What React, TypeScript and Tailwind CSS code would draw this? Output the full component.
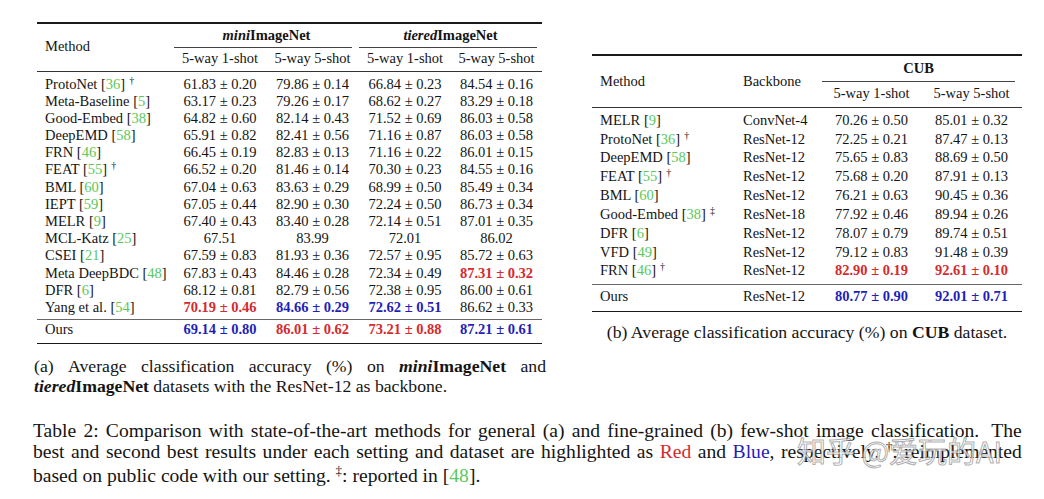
import React from "react";

type Cell = string | { t: string; c: "r" | "b" };

const RED = "text-[#d42a2e]";
const BLUE = "text-[#1f1fb8]";

function Cite({ n }: { n: string }) {
  return (
    <>
      [<span className="text-[#5ac85a]">{n}</span>]
    </>
  );
}

function Dag({ s }: { s: string }) {
  return <span className="ml-[4px] relative -top-[5px] text-[10px] leading-none">{s}</span>;
}

function Val({ v }: { v: Cell }) {
  if (typeof v === "string") return <span>{v}</span>;
  return <span className={`font-bold ${v.c === "r" ? RED : BLUE}`}>{v.t}</span>;
}

function Name({ name, cite, mark }: { name: string; cite?: string; mark?: string }) {
  return (
    <span>
      {name}
      {cite ? <> <Cite n={cite} /></> : null}
      {mark ? <Dag s={mark} /> : null}
    </span>
  );
}

function JLine({ words, className }: { words: React.ReactNode[]; className?: string }) {
  return (
    <div className={`flex justify-between whitespace-nowrap ${className ?? ""}`}>
      {words.map((w, i) => (
        <span key={i}>{w}</span>
      ))}
    </div>
  );
}

const r = (t: string): Cell => ({ t, c: "r" });
const b = (t: string): Cell => ({ t, c: "b" });

const leftRows: { name: string; cite: string; mark?: string; v: Cell[] }[] = [
  { name: "ProtoNet", cite: "36", mark: "†", v: ["61.83 ± 0.20", "79.86 ± 0.14", "66.84 ± 0.23", "84.54 ± 0.16"] },
  { name: "Meta-Baseline", cite: "5", v: ["63.17 ± 0.23", "79.26 ± 0.17", "68.62 ± 0.27", "83.29 ± 0.18"] },
  { name: "Good-Embed", cite: "38", v: ["64.82 ± 0.60", "82.14 ± 0.43", "71.52 ± 0.69", "86.03 ± 0.58"] },
  { name: "DeepEMD", cite: "58", v: ["65.91 ± 0.82", "82.41 ± 0.56", "71.16 ± 0.87", "86.03 ± 0.58"] },
  { name: "FRN", cite: "46", v: ["66.45 ± 0.19", "82.83 ± 0.13", "71.16 ± 0.22", "86.01 ± 0.15"] },
  { name: "FEAT", cite: "55", mark: "†", v: ["66.52 ± 0.20", "81.46 ± 0.14", "70.30 ± 0.23", "84.55 ± 0.16"] },
  { name: "BML", cite: "60", v: ["67.04 ± 0.63", "83.63 ± 0.29", "68.99 ± 0.50", "85.49 ± 0.34"] },
  { name: "IEPT", cite: "59", v: ["67.05 ± 0.44", "82.90 ± 0.30", "72.24 ± 0.50", "86.73 ± 0.34"] },
  { name: "MELR", cite: "9", v: ["67.40 ± 0.43", "83.40 ± 0.28", "72.14 ± 0.51", "87.01 ± 0.35"] },
  { name: "MCL-Katz", cite: "25", v: ["67.51", "83.99", "72.01", "86.02"] },
  { name: "CSEI", cite: "21", v: ["67.59 ± 0.83", "81.93 ± 0.36", "72.57 ± 0.95", "85.72 ± 0.63"] },
  { name: "Meta DeepBDC", cite: "48", v: ["67.83 ± 0.43", "84.46 ± 0.28", "72.34 ± 0.49", r("87.31 ± 0.32")] },
  { name: "DFR", cite: "6", v: ["68.12 ± 0.81", "82.79 ± 0.56", "72.38 ± 0.95", "86.00 ± 0.61"] },
  { name: "Yang et al.", cite: "54", v: [r("70.19 ± 0.46"), b("84.66 ± 0.29"), b("72.62 ± 0.51"), "86.62 ± 0.33"] },
];

const leftOurs: Cell[] = [b("69.14 ± 0.80"), r("86.01 ± 0.62"), r("73.21 ± 0.88"), b("87.21 ± 0.61")];

const rightRows: { name: string; cite: string; mark?: string; bb: string; v: Cell[] }[] = [
  { name: "MELR", cite: "9", bb: "ConvNet-4", v: ["70.26 ± 0.50", "85.01 ± 0.32"] },
  { name: "ProtoNet", cite: "36", mark: "†", bb: "ResNet-12", v: ["72.25 ± 0.21", "87.47 ± 0.13"] },
  { name: "DeepEMD", cite: "58", bb: "ResNet-12", v: ["75.65 ± 0.83", "88.69 ± 0.50"] },
  { name: "FEAT", cite: "55", mark: "†", bb: "ResNet-12", v: ["75.68 ± 0.20", "87.91 ± 0.13"] },
  { name: "BML", cite: "60", bb: "ResNet-12", v: ["76.21 ± 0.63", "90.45 ± 0.36"] },
  { name: "Good-Embed", cite: "38", mark: "‡", bb: "ResNet-18", v: ["77.92 ± 0.46", "89.94 ± 0.26"] },
  { name: "DFR", cite: "6", bb: "ResNet-12", v: ["78.07 ± 0.79", "89.74 ± 0.51"] },
  { name: "VFD", cite: "49", bb: "ResNet-12", v: ["79.12 ± 0.83", "91.48 ± 0.39"] },
  { name: "FRN", cite: "46", mark: "†", bb: "ResNet-12", v: [r("82.90 ± 0.19"), r("92.61 ± 0.10")] },
];

const LW = ["w-[137px]", "w-[92px]", "w-[93px]", "w-[92px]", "w-[91px]"];
const RW = ["w-[143px]", "w-[87px]", "w-[99px]", "w-[101px]"];

function LeftTable() {
  return (
    <div className="w-[505px] text-[14.5px]">
      <div className="h-[1.5px] bg-[#1a1a1a]" />
      <div className="flex">
        <div className={`${LW[0]} h-[47px] flex items-center pl-[8px]`}>Method</div>
        <div className="w-[185px] flex flex-col">
          <div className="h-[23.5px] leading-[23.5px] text-center font-bold">
            <i>mini</i>ImageNet
          </div>
          <div className="h-px bg-[#444] mr-[7px]" />
          <div className="flex h-[22.5px] leading-[21px]">
            <div className={`${LW[1]} text-center`}>5-way 1-shot</div>
            <div className={`${LW[2]} text-center`}>5-way 5-shot</div>
          </div>
        </div>
        <div className="w-[183px] flex flex-col">
          <div className="h-[23.5px] leading-[23.5px] text-center font-bold">
            <i>tiered</i>ImageNet
          </div>
          <div className="h-px bg-[#444] mr-[5px]" />
          <div className="flex h-[22.5px] leading-[21px]">
            <div className={`${LW[3]} text-center`}>5-way 1-shot</div>
            <div className={`${LW[4]} text-center`}>5-way 5-shot</div>
          </div>
        </div>
      </div>
      <div className="h-px bg-[#333]" />
      <div className="pt-[4px] pb-[2.7px]">
        {leftRows.map((row, i) => (
          <div key={i} className="flex h-[17.2px] leading-[17.2px] whitespace-nowrap">
            <div className={`${LW[0]} pl-[8px]`}>
              <Name name={row.name} cite={row.cite} mark={row.mark} />
            </div>
            {row.v.map((v, j) => (
              <div key={j} className={`${LW[j + 1]} text-center`}>
                <Val v={v} />
              </div>
            ))}
          </div>
        ))}
      </div>
      <div className="h-[1.5px] bg-[#666]" />
      <div className="pt-[0.5px] pb-[4.5px]">
        <div className="flex h-[17.2px] leading-[17.2px] whitespace-nowrap">
          <div className={`${LW[0]} pl-[8px]`}>Ours</div>
          {leftOurs.map((v, j) => (
            <div key={j} className={`${LW[j + 1]} text-center`}>
              <Val v={v} />
            </div>
          ))}
        </div>
      </div>
      <div className="h-[1.5px] bg-[#1a1a1a]" />
    </div>
  );
}

function RightTable() {
  return (
    <div className="w-[430px] text-[14.5px]">
      <div className="h-[1.5px] bg-[#1a1a1a]" />
      <div className="flex">
        <div className={`${RW[0]} h-[51.8px] flex items-center pl-[8px]`}>Method</div>
        <div className={`${RW[1]} h-[51.8px] flex items-center pl-[8px]`}>Backbone</div>
        <div className="w-[200px] flex flex-col">
          <div className="h-[25.2px] leading-[25.2px] text-center font-bold mr-[7px]">CUB</div>
          <div className="h-px bg-[#444] mr-[7px]" />
          <div className="flex h-[25.6px] leading-[23.5px]">
            <div className={`${RW[2]} text-center`}>5-way 1-shot</div>
            <div className={`${RW[3]} text-center`}>5-way 5-shot</div>
          </div>
        </div>
      </div>
      <div className="h-px bg-[#333]" />
      <div className="pt-[2.4px] pb-[3.6px]">
        {rightRows.map((row, i) => (
          <div key={i} className="flex h-[18.85px] leading-[18.85px] whitespace-nowrap">
            <div className={`${RW[0]} pl-[8px]`}>
              <Name name={row.name} cite={row.cite} mark={row.mark} />
            </div>
            <div className={`${RW[1]} pl-[8px]`}>{row.bb}</div>
            {row.v.map((v, j) => (
              <div key={j} className={`${RW[j + 2]} text-center`}>
                <Val v={v} />
              </div>
            ))}
          </div>
        ))}
      </div>
      <div className="h-[1.5px] bg-[#666]" />
      <div className="pt-[2px] pb-[4.3px]">
        <div className="flex h-[18.85px] leading-[18.85px] whitespace-nowrap">
          <div className={`${RW[0]} pl-[8px]`}>Ours</div>
          <div className={`${RW[1]} pl-[8px]`}>ResNet-12</div>
          <div className={`${RW[2]} text-center`}>
            <Val v={b("80.77 ± 0.90")} />
          </div>
          <div className={`${RW[3]} text-center`}>
            <Val v={b("92.01 ± 0.71")} />
          </div>
        </div>
      </div>
      <div className="h-[1.5px] bg-[#1a1a1a]" />
    </div>
  );
}

export default function App() {
  const line1 = "Table 2: Comparison with state-of-the-art methods for general (a) and fine-grained (b) few-shot image classification.".split(" ");
  const line2a = "best and second best results under each setting and dataset are highlighted as".split(" ");
  return (
    <div className="relative w-[1044px] h-[499px] bg-white overflow-hidden text-[#141414] font-['Liberation_Serif',serif]">
      <div className="flex items-start">
        <div className="ml-[37px] mt-[22px] w-[509px]">
          <LeftTable />
          <div className="mt-[11.6px] text-[17.7px] leading-[20px] -ml-[3px]">
            <JLine
              words={[
                "(a)",
                "Average",
                "classification",
                "accuracy",
                "(%)",
                "on",
                <b key="m">
                  <i>mini</i>ImageNet
                </b>,
                "and",
              ]}
            />
            <div className="whitespace-nowrap">
              <b>
                <i>tiered</i>ImageNet
              </b>{" "}
              datasets with the ResNet-12 as backbone.
            </div>
          </div>
        </div>
        <div className="ml-[46px] mt-[54px] w-[430px]">
          <RightTable />
          <div className="mt-[10px] text-[17.7px] leading-[20px] text-center whitespace-nowrap">
            (b) Average classification accuracy (%) on <b>CUB</b> dataset.
          </div>
        </div>
      </div>
      <div className="ml-[33px] mt-[24px] w-[989px] text-[19.6px] leading-[21.5px]">
        <JLine words={[...line1, "\u00a0The"]} />
        <JLine
          words={[
            ...line2a,
            <span key="r" className="text-[#d42a2e]">Red</span>,
            "and",
            <span key="b">
              <span className="text-[#1f1fb8]">Blue</span>,
            </span>,
            "respectively.",
            <span key="d">
              <span className="relative -top-[7px] text-[13px]">†</span>:
            </span>,
            "reimplemented",
          ]}
        />
        <div className="whitespace-nowrap">
          based on public code with our setting.{" "}
          <span className="relative -top-[7px] text-[13px]">‡</span>: reported in <Cite n="48" />.
        </div>
      </div>
      <div className="absolute left-[797px] top-[436px] text-[29px] leading-none whitespace-nowrap font-['Noto_Sans_CJK_SC','Noto_Sans',sans-serif] text-[rgba(255,255,255,0.72)] [-webkit-text-stroke:1px_rgba(120,120,120,0.6)]">
        知乎 @爱玩的AI
      </div>
    </div>
  );
}
